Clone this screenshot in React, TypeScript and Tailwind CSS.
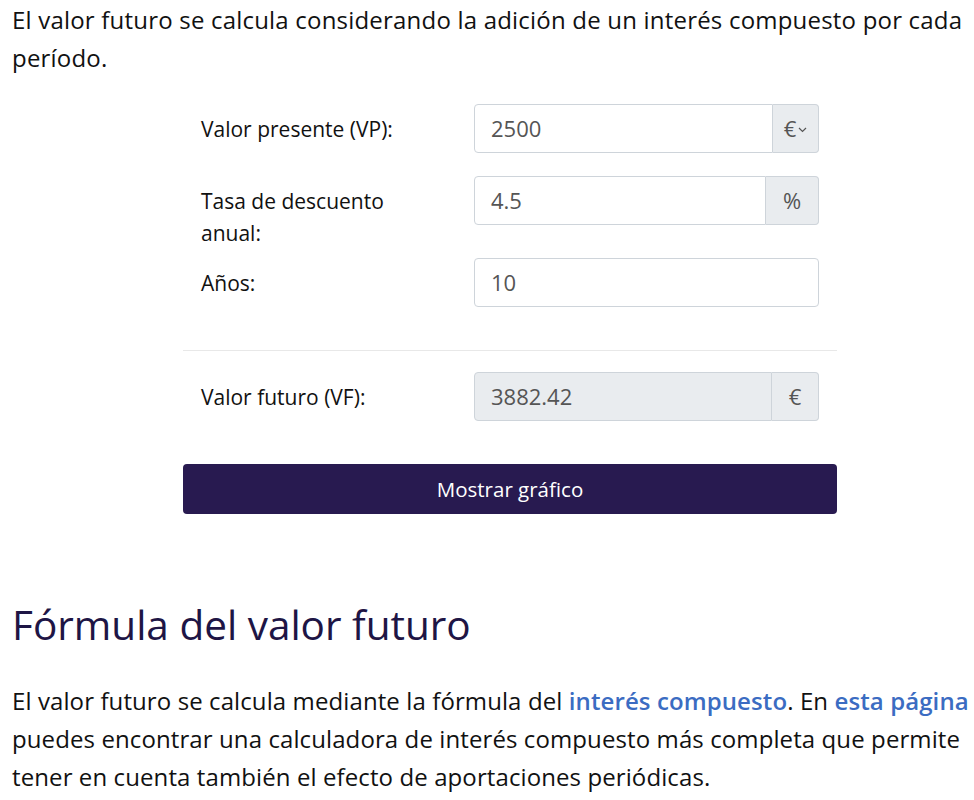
import React from 'react';

const font = { fontFamily: '"Open Sans", "Noto Sans", sans-serif' };

const Row: React.FC<{ label: React.ReactNode; value: string; addon?: React.ReactNode; readOnly?: boolean; addonW?: string; className?: string }> = ({
  label,
  value,
  addon,
  readOnly,
  addonW = 'w-[46px]',
  className = '',
}) => (
  <div className={`flex items-start px-[18px] ${className}`}>
    <div className="w-[273px] pt-[9px] leading-[32px] text-[21px] text-[#111]">{label}</div>
    <div className="flex w-[345px] h-[49px] text-[22px]">
      <div
        className={`flex-1 flex items-center pl-[16px] border border-[#ced4da] text-[#555] ${
          addon ? 'rounded-l-[4px]' : 'rounded-[4px]'
        } ${readOnly ? 'bg-[#e9ecef]' : 'bg-white'}`}
      >
        {value}
      </div>
      {addon && (
        <div
          className={`${addonW} flex items-center justify-center border border-l-0 border-[#ced4da] bg-[#e9ecef] rounded-r-[4px] text-[#555]`}
        >
          {addon}
        </div>
      )}
    </div>
  </div>
);

export default function App() {
  return (
    <div className="bg-white w-[974px] min-h-[800px] text-[#111]" style={font}>
      <p className="pl-3 pr-1 pt-[1px] text-[24px] leading-[38px] tracking-[0.2px]">
        El valor futuro se calcula considerando la adición de un interés compuesto por cada período.
      </p>

      <div className="w-[654px] ml-[183px] mt-[27px]">
        <Row
          label="Valor presente (VP):"
          value="2500"
          addon={
            <span className="flex items-center">
              €
              <svg width="9" height="6" viewBox="0 0 9 6" className="ml-[2px] mt-[3px]">
                <path d="M1 1l3.5 3.5L8 1" fill="none" stroke="#555" strokeWidth="1.2" />
              </svg>
            </span>
          }
          addonW="w-[46px]"
        />
        <Row label={<>Tasa de descuento<br />anual:</>} value="4.5" addon="%" addonW="w-[53px]" className="mt-[23px]" />
        <Row label="Años:" value="10" className="mt-[9px]" />

        <div className="border-t border-[#e8e8e8] mt-[43px]" />

        <Row label="Valor futuro (VF):" value="3882.42" addon="€" readOnly addonW="w-[47px]" className="mt-[21px]" />

        <button className="mt-[43px] w-full h-[50px] rounded-[4px] bg-[#281a50] text-white text-[20.5px]">
          Mostrar gráfico
        </button>
      </div>

      <h2 className="px-3 mt-[87px] text-[40.5px] leading-[48px] text-[#1e1545]">Fórmula del valor futuro</h2>

      <p className="pl-3 pr-1 mt-[33px] text-[24px] leading-[38px] tracking-[0.1px]">
        El valor futuro se calcula mediante la fórmula del{' '}
        <a className="text-[#3b6cc2] font-semibold">interés compuesto</a>. En{' '}
        <a className="text-[#3b6cc2] font-semibold">esta página</a> puedes encontrar una calculadora de interés compuesto más
        completa que permite tener en cuenta también el efecto de aportaciones periódicas.
      </p>
    </div>
  );
}
